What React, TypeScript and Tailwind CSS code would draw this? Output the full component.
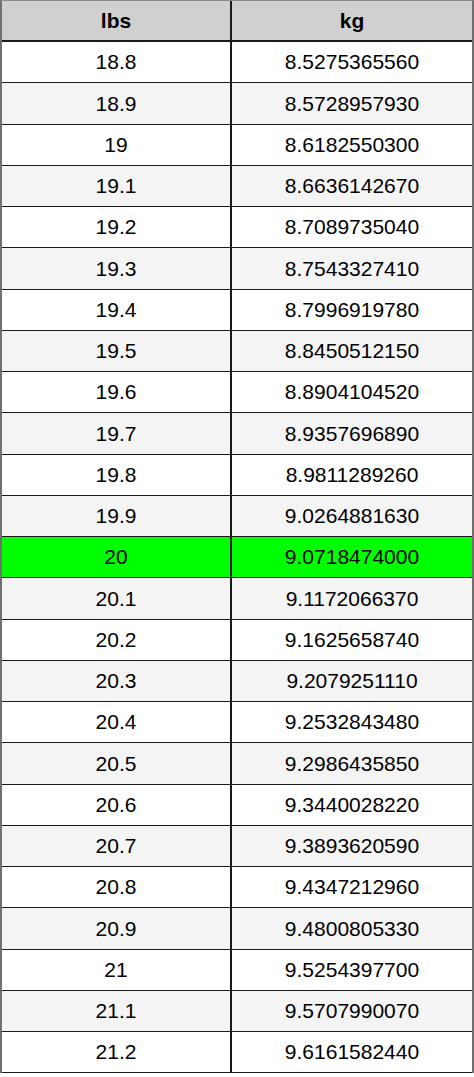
const rows: [string, string][] = [
  ["18.8", "8.5275365560"],
  ["18.9", "8.5728957930"],
  ["19", "8.6182550300"],
  ["19.1", "8.6636142670"],
  ["19.2", "8.7089735040"],
  ["19.3", "8.7543327410"],
  ["19.4", "8.7996919780"],
  ["19.5", "8.8450512150"],
  ["19.6", "8.8904104520"],
  ["19.7", "8.9357696890"],
  ["19.8", "8.9811289260"],
  ["19.9", "9.0264881630"],
  ["20", "9.0718474000"],
  ["20.1", "9.1172066370"],
  ["20.2", "9.1625658740"],
  ["20.3", "9.2079251110"],
  ["20.4", "9.2532843480"],
  ["20.5", "9.2986435850"],
  ["20.6", "9.3440028220"],
  ["20.7", "9.3893620590"],
  ["20.8", "9.4347212960"],
  ["20.9", "9.4800805330"],
  ["21", "9.5254397700"],
  ["21.1", "9.5707990070"],
  ["21.2", "9.6161582440"],
];

export default function App() {
  return (
    <div className="w-[474px] h-[1077px] bg-white font-['Liberation_Sans',Arial,sans-serif] text-[21px] text-black">
      <div className="border-x-2 border-t border-x-[#707070] border-t-[#8a8a8a]">
        <div className="flex h-[41px] bg-[#d0d0d0] border-b-2 border-[#1a1a1a] font-bold">
          <div className="w-[230px] flex items-center justify-center border-r-2 border-[#1a1a1a]">lbs</div>
          <div className="flex-1 flex items-center justify-center">kg</div>
        </div>
        {rows.map(([lbs, kg], i) => {
          const hl = lbs === "20";
          const bg = hl ? "bg-[#00ff00]" : i % 2 === 0 ? "bg-white" : "bg-[#f4f4f4]";
          return (
            <div key={lbs} className={`flex h-[41.25px] border-b-[1.5px] border-[#1a1a1a] ${bg}`}>
              <div className="w-[230px] flex items-center justify-center border-r-2 border-[#1a1a1a]">{lbs}</div>
              <div className="flex-1 flex items-center justify-center">{kg}</div>
            </div>
          );
        })}
      </div>
    </div>
  );
}
